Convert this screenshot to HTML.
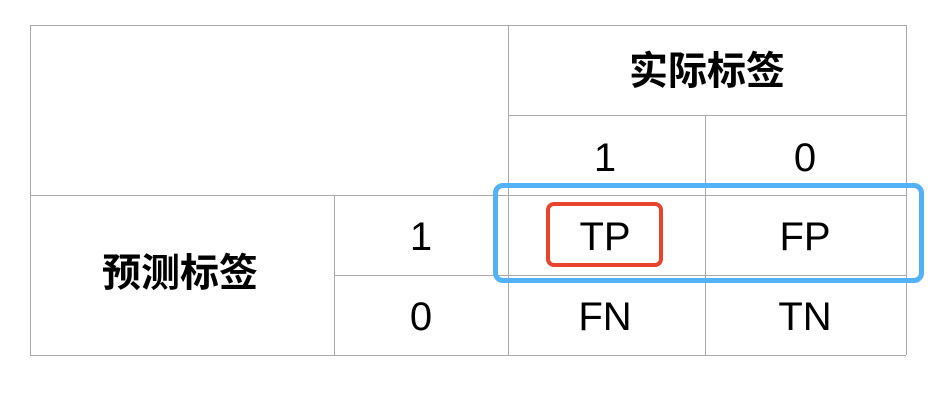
<!DOCTYPE html>
<html><head><meta charset="utf-8"><style>
body{margin:0;width:952px;height:402px;background:#fff;position:relative;overflow:hidden}
.h{position:absolute;height:1px;background:#aaa}
.v{position:absolute;width:1px;background:#aaa}
.t{position:absolute;transform:translate(-50%,-50%);font-family:"Liberation Sans",sans-serif;font-size:40px;color:#000;white-space:nowrap;line-height:1}
.c{font-family:"Liberation Sans","Noto Sans CJK SC",sans-serif;font-weight:bold;font-size:39px}
</style></head><body>
<div class="h" style="left:30px;width:876px;top:25px"></div>
<div class="h" style="left:508px;width:398px;top:115px"></div>
<div class="h" style="left:30px;width:876px;top:195px"></div>
<div class="h" style="left:334px;width:572px;top:275px"></div>
<div class="h" style="left:30px;width:876px;top:355px"></div>
<div class="v" style="left:30px;top:25px;height:330px"></div>
<div class="v" style="left:508px;top:25px;height:330px"></div>
<div class="v" style="left:906px;top:25px;height:330px"></div>
<div class="v" style="left:705px;top:115px;height:240px"></div>
<div class="v" style="left:334px;top:195px;height:160px"></div>
<div class="t c" style="left:707px;top:72px">实际标签</div>
<div class="t c" style="left:180px;top:274px">预测标签</div>
<div class="t" style="left:605px;top:158px">1</div>
<div class="t" style="left:805px;top:158px">0</div>
<div class="t" style="left:421px;top:237px">1</div>
<div class="t" style="left:421px;top:317px">0</div>
<div class="t" style="left:605px;top:237px">TP</div>
<div class="t" style="left:805px;top:237px">FP</div>
<div class="t" style="left:605px;top:317px">FN</div>
<div class="t" style="left:805px;top:317px">TN</div>
<div style="position:absolute;left:493px;top:183px;width:421px;height:90px;border:5px solid #52b2f8;border-radius:10px"></div>
<div style="position:absolute;left:546px;top:202px;width:109px;height:57px;border:4px solid #e8432c;border-radius:8px"></div>
</body></html>
